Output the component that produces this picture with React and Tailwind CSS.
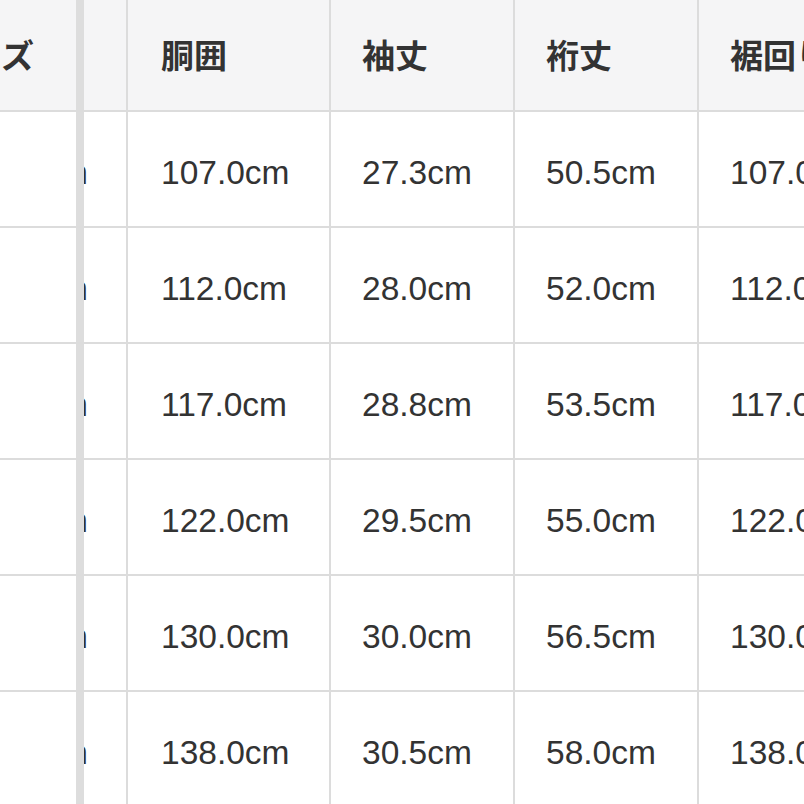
import React from "react";

const cols = [
  { h: "胴囲", w: "w-[203px] pl-[33px]", v: ["107.0", "112.0", "117.0", "122.0", "130.0", "138.0"] },
  { h: "袖丈", w: "w-[184px] pl-[31px]", v: ["27.3", "28.0", "28.8", "29.5", "30.0", "30.5"] },
  { h: "裄丈", w: "w-[184px] pl-[31px]", v: ["50.5", "52.0", "53.5", "55.0", "56.5", "58.0"] },
  { h: "裾回り", w: "w-[160px] pl-[31px]", v: ["107.0", "112.0", "117.0", "122.0", "130.0", "138.0"] },
];

const hidden = ["59.0", "61.0", "63.0", "65.0", "67.0", "69.0"];

const jp = { fontFamily: '"Noto Sans CJK JP", "Noto Sans", sans-serif' };
const num = { fontFamily: '"Liberation Sans", Arial, sans-serif' };

export default function App() {
  return (
    <div className="w-[804px] h-[804px] overflow-hidden bg-white text-[#333]">
      <div className="flex flex-col w-[1000px]">
        {/* header */}
        <div className="flex h-[112px] bg-[#f5f5f6] border-b-2 border-[#dcdcdc]" style={jp}>
          <div className="w-[76px] shrink-0 flex items-center justify-end pr-[42px] overflow-hidden whitespace-nowrap text-[33px] font-bold">
            サイズ
          </div>
          <div className="w-[8px] shrink-0 bg-[#dddddd]" />
          <div className="w-[44px] shrink-0 border-r-2 border-[#dcdcdc]" />
          {cols.map((c) => (
            <div
              key={c.h}
              className={`${c.w} shrink-0 flex items-center border-r-2 border-[#dcdcdc] whitespace-nowrap text-[33px] font-bold`}
            >
              {c.h}
            </div>
          ))}
        </div>
        {/* body */}
        {hidden.map((hv, i) => (
          <div key={i} className="flex h-[116px] bg-white border-b-2 border-[#dcdcdc]" style={num}>
            <div className="w-[76px] shrink-0" />
            <div className="w-[8px] shrink-0 bg-[#dddddd]" />
            <div className="w-[44px] shrink-0 flex items-center justify-end pr-[38px] pt-2 overflow-hidden whitespace-nowrap text-[33.5px] border-r-2 border-[#dcdcdc]">
              {hv}cm
            </div>
            {cols.map((c) => (
              <div
                key={c.h}
                className={`${c.w} shrink-0 flex items-center pt-2 border-r-2 border-[#dcdcdc] whitespace-nowrap text-[33.5px]`}
              >
                {c.v[i]}cm
              </div>
            ))}
          </div>
        ))}
      </div>
    </div>
  );
}
